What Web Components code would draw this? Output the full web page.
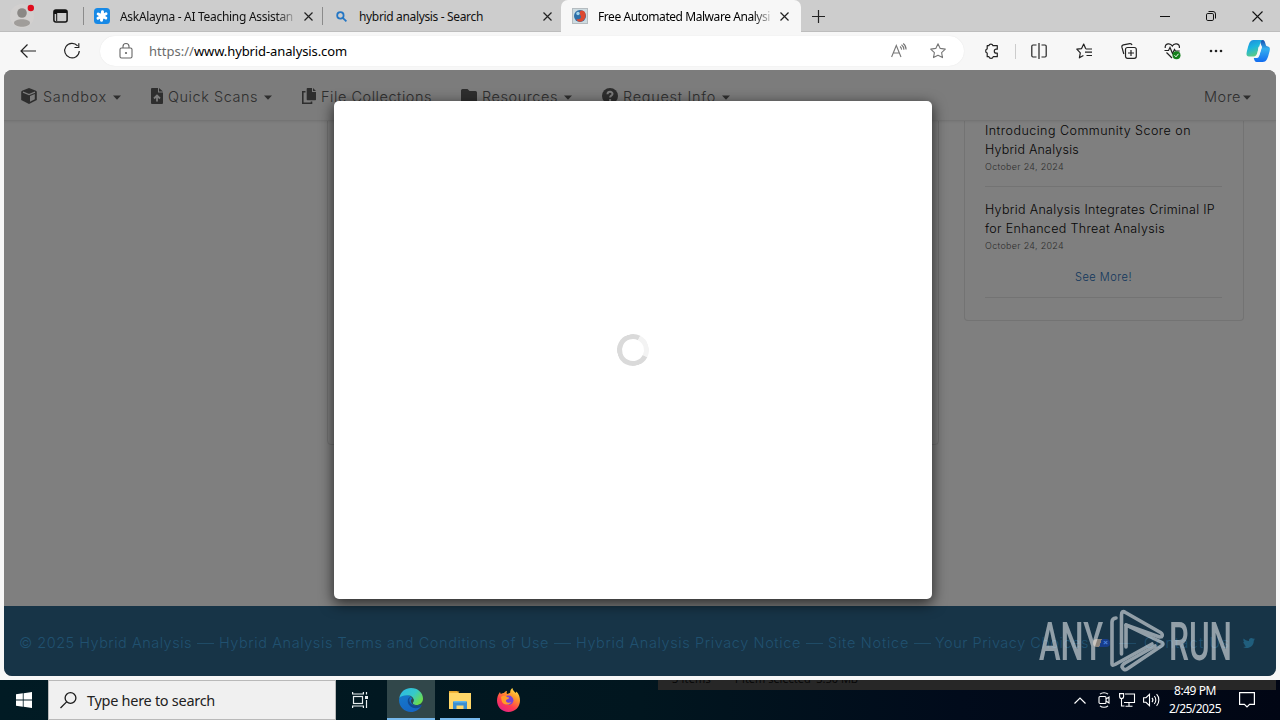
<!DOCTYPE html>
<html lang="en">
<head>
<meta charset="utf-8">
<title>Free Automated Malware Analysis Service</title>
<style>
html,body{margin:0;width:1280px;height:720px;overflow:hidden;background:#f6f6f6}
body{font-family:"Noto Sans","Open Sans",sans-serif}
</style>
</head>
<body>
<desktop-screen></desktop-screen>
<script>
const define = (name, css, html, setup) => customElements.define(name, class extends HTMLElement {
  constructor() {
    super();
    const root = this.attachShadow({ mode: 'open' });
    const t = document.createElement('template');
    t.innerHTML = `<style>*{box-sizing:border-box}svg{display:block;flex:none;overflow:visible}${css}</style>${html}`;
    root.append(t.content.cloneNode(true));
  }
  connectedCallback() { if (setup) setup(this, this.shadowRoot); }
});

/* Single line of text tracked so that it fills the width in its "w" attribute */
define('fit-text', ':host{display:block;white-space:nowrap;flex:none}span{display:inline-block;white-space:pre}', '<span><slot></slot></span>', (el, root) => {
  const s = root.querySelector('span'), w = +el.getAttribute('w');
  const n = el.textContent.length;
  s.style.letterSpacing = '0px';
  const now = s.getBoundingClientRect().width;
  if (now) s.style.letterSpacing = ((w - now) / n).toFixed(3) + 'px';
  el.style.width = w + 'px';
});

const ICONS = {
  cube: [16,16,'<path fill="currentColor" d="M8 0l7 2.700.8 1V12l-7.800 4L.2 12V3.700L1 2.700z"/><path fill="none" stroke="#7c7c7c" stroke-width="1.300" d="M2 4.200l6 2.300 6-2.300"/><path fill="#7c7c7c" d="M9 8l4.800-2v5.200L9 13.700z"/>'],
  fileup: [12,16,'<path fill="currentColor" d="M1 0h6v4.500h5V15a1 1 0 0 1-1 1H1a1 1 0 0 1-1-1V1a1 1 0 0 1 1-1zM8 0l4 3.500H8z"/><path fill="none" stroke="#7c7c7c" stroke-width="1.800" d="M6 13.500V8M3 10.500l3-3 3 3"/>'],
  copy: [14,16,'<path fill="currentColor" d="M5.500 0H10v4h4v7.500a.8.8 0 0 1-.8.8H5.500a.8.800 0 0 1-.8-.8V.8a.8.800 0 0 1 .8-.8zM11 0l3 3h-3z"/><path fill="none" stroke="currentColor" stroke-width="1.600" d="M3.500 3.800H.8v11.400h8.700v-1.700"/>'],
  folder: [16,14,'<path fill="currentColor" d="M1.500 0h5l2 2h6A1.500 1.500 0 0 1 16 3.500v9a1.500 1.500 0 0 1-1.500 1.500h-13A1.500 1.500 0 0 1 0 12.500v-11A1.500 1.500 0 0 1 1.500 0z"/>'],
  help: [16,16,'<circle cx="8" cy="8" r="8" fill="currentColor"/><path fill="none" stroke="#7c7c7c" stroke-width="2" d="M5.500 6.200C5.700 3 10.700 3.200 10.500 6c-.1 1.700-2.400 1.600-2.400 3.400M8.100 11v2"/>'],
  caret: [8,5,'<path fill="currentColor" d="M0 .5h8L4 4.700z"/>'],
  close: [9,9,'<path stroke="#222" stroke-width="1.200" d="M.5.5l8 8M8.500.5l-8 8"/>'],
  back: [16,14,'<path fill="none" stroke="#222" stroke-width="1.200" d="M16 7H1M7.500.5L1 7l6.500 6.500"/>'],
  reload: [16,16,'<path fill="none" stroke="#222" stroke-width="1.200" d="M13.600 2.900A7.300 7.300 0 1 0 15.300 8M14.800.3v4.200h-4.300"/>'],
  lock: [14,16,'<g fill="none" stroke="#666" stroke-width="1.100"><rect x="1" y="5" width="12" height="10" rx="1.500"/><path d="M4 5V3.500a3 3 0 0 1 6 0V5"/></g><circle cx="7" cy="10" r="1.100" fill="#666"/>'],
  read: [16,16,'<g fill="none" stroke="#777" stroke-width="1.100"><path d="M.6 14L5.300 2.500l4.700 11.500M2.200 10h6.200M9 3.500c1 .8 1.500 1.900 1.600 3.100M10.500 1.800c1.600 1.200 2.400 3 2.400 5M12.200.5c2 1.500 2.900 3.800 2.900 6"/></g>'],
  star: [16,16,'<path fill="none" stroke="#777" stroke-width="1.100" stroke-linejoin="round" d="M8 .8l2.200 4.600 5.100.7-3.700 3.500.9 5L8 12.200l-4.500 2.400.9-5L.7 6.100l5.100-.7z"/>'],
  puzzle: [15,16,'<path fill="none" stroke="#222" stroke-width="1.200" stroke-linejoin="round" d="M4.800 2.700a2.200 2.200 0 0 1 4.200 0h4.300v3.500h-1a2 2 0 0 0 0 4h1v3.500H9.200a2.200 2.200 0 0 1-4.300 0H3.200v-3.600a2.200 2.200 0 0 1 0-4.200V2.700z"/>'],
  split: [16,16,'<path fill="none" stroke="#222" stroke-width="1.200" d="M5.500 2H2a1.200 1.200 0 0 0-1.200 1.200v9.600A1.200 1.200 0 0 0 2 14h3.500M10.500 2H14a1.200 1.200 0 0 1 1.200 1.200v9.600A1.200 1.200 0 0 1 14 14h-3.500M8 0v16"/>'],
  favs: [16,16,'<path fill="none" stroke="#222" stroke-width="1.200" stroke-linejoin="round" d="M9.700 5.800L7.700 1 5.600 5.600.8 6.200l3.500 3.600-.9 5 4-2.300M9.700 6H16M9 9.200h7M10.500 12.500H16"/>'],
  coll: [16,16,'<g fill="none" stroke="#222" stroke-width="1.200"><rect x="4.500" y="4.500" width="10.800" height="10.800" rx="2"/><path d="M10 7v6M7 10h6M2.800 11L.9 4.200a2 2 0 0 1 1.500-2.300L8.800.6a2 2 0 0 1 2.200 1.400"/></g>'],
  heart: [17,16,'<path fill="none" stroke="#222" stroke-width="1.200" d="M.5 7.500h4l1.500-3 2.500 6 2-4 1 1.500h4.200M1.200 5C.8 0 6.500-.3 8.300 3 10-.3 16 0 15.400 5M2.500 9.500L8 15"/><circle cx="12.500" cy="12.300" r="4" fill="#15801c"/><path stroke="#fff" fill="none" d="M10.500 12.300l1.500 1.500 2.500-3"/>'],
  dots: [14,4,'<g fill="#222"><circle cx="2" cy="2" r="1.300"/><circle cx="7" cy="2" r="1.300"/><circle cx="12" cy="2" r="1.300"/></g>'],
  copilot: [24,24,'<defs><linearGradient id="a" x2=".4" y2="1"><stop stop-color="#2088dd"/><stop offset=".5" stop-color="#1bb5df"/><stop offset="1" stop-color="#5ecb83"/></linearGradient><linearGradient id="b" x2="0" y1="0" y2="1"><stop stop-color="#1749ad"/><stop offset=".4" stop-color="#34afef"/><stop offset="1" stop-color="#126cf0"/></linearGradient></defs><path fill="url(#b)" d="M14 1h2.500c2 0 2.500 2 3.200 4.500.4 1.500 1 1.800 2.300 2 3 .7 1.800 4 .8 7.500-1.200 4.500-2.500 8-6 8h-6c-2 0-2.500-2-3-4h3c2 0 2.500-2 3.500-5.500L16 8c-1-2-2-5-2-7z"/><path fill="url(#a)" d="M7.500 1H17c-2 .3-2.600 2.500-3.600 6l-2 6.800c-.8 2.700-1.700 3.700-4 3.700H3c-3.600 0-2.500-4-1.500-7.500C2.800 5.500 3.500 1 7.500 1z"/><path fill="#f7f7f7" d="M12.500 7.700h3.300l-2.600 8.600H9.500c1 0 1.500-1 2-2.600z"/>'],
  winlogo: [16,16,'<path fill="#fff" d="M0 2.200L6.800 1.300v6.300H0zM7.600 1.200L16 0v7.600H7.600zM0 8.400h6.800v6.300L0 13.800zM7.600 8.400H16V16l-8.400-1.200z"/>'],
  search: [17,17,'<g fill="none" stroke="#1c1c1c" stroke-width="1.300"><circle cx="10.500" cy="6" r="5.400"/><path d="M6.600 9.900L.5 16"/></g>'],
  taskview: [16,16,'<g fill="none" stroke="#e8eef0" stroke-width="1.200"><rect x="1.500" y="4.500" width="9" height="7"/><path d="M.6 0v2h10.800V0M.6 16v-2h10.800v2M14.500 0v2.500M14.500 8v8"/></g><path fill="#e8eef0" d="M13 4h3v3h-3z"/>'],
  edge: [24,24,'<defs><linearGradient id="e1" x2="1" y2=".6"><stop stop-color="#2bb7e8"/><stop offset=".6" stop-color="#36c9c9"/><stop offset="1" stop-color="#6bdc4e"/></linearGradient><linearGradient id="e2" x2=".6" y2="1"><stop stop-color="#1579c9"/><stop offset="1" stop-color="#1565c4"/></linearGradient></defs><path fill="url(#e2)" d="M.3 10C2 6 8 6 11 8c3 2 3 8 11.600 9.500C20.500 21.500 16.500 24 12 24 5.400 24 0 18.600 0 12z"/><path fill="url(#e1)" d="M.3 10C1.500 3.500 6.500 0 12 0c7 0 12 5 12 10.500 0 4-3 6.500-6.500 6.500-3 0-4.300-1.200-3.500-2.500 1.800-2.500 0-6.500-4-7C6 7 2 8 .3 10z"/><path fill="#124a91" d="M8.700 13c0-2.500 1.500-4 3.300-4.200-3 2.200-1.700 6 1 7.700 3 1.800 6.500 1.500 9 .3 1 0 .3 1-.5 2-5 3.500-12.800 0-12.800-5.800z"/><path fill="#31474a" d="M14 14.500c1-1.200.9-3-.3-4.200-1.800.9-2.500 3-.7 5.500 2 2.200 6 2.500 8.800.8-3 1-9 .5-7.800-2.100z"/>'],
  explorer: [22,18,'<path fill="#e09a20" d="M0 0h8l2 2H0z"/><path fill="#ffd768" d="M0 2h22v16H0z"/><path fill="#f0b63b" d="M0 2h9l1.500-1.500H0z"/><path fill="#3b8fd0" d="M4 10.500h14V18h-3.500v-3.500h-7V18H4z"/><path fill="#60b7ea" d="M5 10h12v1.500H5z"/>'],
  firefox: [23,24,'<defs><linearGradient id="f1" x1=".9" y1="0" x2=".3" y2="1"><stop stop-color="#fff04e"/><stop offset=".35" stop-color="#ff9a2a"/><stop offset=".7" stop-color="#ff3b50"/><stop offset="1" stop-color="#e52383"/></linearGradient></defs><path fill="url(#f1)" d="M3 4c.2 1 .5 1.500 1 2 .8-.8 2-1 3-1 1-1.500 2-2 3-2-.5 1-.5 2 0 3 1.500 0 2-1 3.200-1.300C13 3 14 1 15.500 0c0 2 1.500 3.200 3.300 5l.6-1.500C22 6 23 9.500 23 12.500 23 19 18 24 11.500 24S0 19 0 12.500C0 9.500 1 6.500 3 4z"/><circle cx="11.700" cy="12.200" r="4.700" fill="#7642d8"/><path fill="#ff9c28" d="M4 9c2-2 5-1.500 6 0 1 .3 2 .3 2 1-.2 1.300-3 1-3 3 .3 2 4 2.500 5.500.8C13 18 5 17.500 4.500 12z"/>'],
  up: [12,7,'<path fill="none" stroke="#fff" stroke-width="1.200" d="M.5 6.500L6 1l5.500 5.500"/>'],
  meet: [12,16,'<g fill="none" stroke="#fff" stroke-width="1.100"><rect x="1" y="4.500" width="7" height="7" rx="1"/><path d="M8 7l3-2v6L8 9M2 2.200C4 .2 8 .2 10 2.200M2 13.800c2 2 6 2 8 0"/></g>'],
  net: [16,14,'<g fill="none" stroke="#fff" stroke-width="1.100"><path d="M6 1h9.500v8.500H5M10 9.500v3.500M6.500 13.200h7M2.500 6v7h3"/><path d="M.6.600h4v3a2 2 0 0 1-4 0z"/></g>'],
  sound: [17,14,'<g fill="none" stroke="#fff" stroke-width="1.100"><path d="M.6 4.700H3L6.500 1.300v11.400L3 9.300H.6zM9 4.800c1 1.200 1 3.200 0 4.400M11.300 3c2 2.200 2 5.800 0 8M13.600 1.200c3 3.200 3 8.400 0 11.600"/></g>'],
  note: [16,16,'<path fill="none" stroke="#fff" stroke-width="1.200" d="M.6.600h14.800v11.800h-4.800L8 15l-2.600-2.600H.6z"/>'],
  bird: [12,10,'<path fill="#205e7d" d="M12 1.200l-1.200 1.500C10.800 7.500 7 10 3.800 10 2.300 10 1 9.500 0 9c1.300 0 2.500-.3 3.400-1C2.300 8 1.500 7.200 1.200 6.200h1C1 5.900.3 5 .3 3.700l1 .3C.2 3 .1 1.700.7.600 2 2 3.800 3 6 3.100 5.600 1 7 0 8.400 0c.7 0 1.300.3 1.800.8l1.500-.6-1 1.300z"/>'],
  min: [10,10,'<path stroke="#111" d="M0 5.500h10"/>'],
  max: [10,10,'<g fill="none" stroke="#111"><rect x=".5" y="2.500" width="7" height="7" rx="1.300"/><path d="M2.500.5H7a2.500 2.500 0 0 1 2.500 2.500v4.500"/></g>'],
  quit: [11,11,'<path stroke="#111" stroke-width="1.100" d="M.5.5l10 10M10.500.5l-10 10"/>'],
  plus: [13,13,'<path stroke="#222" stroke-width="1.200" d="M0 6.500h13M6.500 0v13"/>'],
  tabs: [15,14,'<rect x=".9" y=".9" width="13.200" height="12.200" rx="2" fill="none" stroke="#111" stroke-width="1.500"/><path fill="#111" d="M1 1h13v3H1zM1 4h3.200v8H3.200V5H1z"/>'],
  person: [24,24,'<circle cx="12" cy="12" r="12" fill="#d2d0cf"/><circle cx="12" cy="9" r="4.800" fill="#8b8885"/><path fill="#a09d9a" d="M4 19c0-5 16-5 16 0-1 5-15 5-16 0z"/><circle cx="20.800" cy="4" r="3.200" fill="#e00b1c"/>'],
  askfav: [16,16,'<rect width="16" height="16" rx="3.500" fill="#1789e6"/><path stroke="#fff" stroke-width="3" stroke-linecap="round" d="M8.500 3.800l-1 8.400M4.200 6l7.600 4M4 10.200l8-4.400"/>'],
  lens: [11,11,'<g fill="none" stroke="#2476c4" stroke-width="1.800"><circle cx="4.400" cy="4.400" r="3.200"/><path d="M6.800 6.800l3.600 3.600"/></g>'],
  hafav: [16,16,'<rect x=".5" y=".5" width="15" height="15" fill="#cddbe0" stroke="#b5bcc0"/><circle cx="8" cy="8" r="6" fill="#2d6fa9"/><path fill="#dd4930" d="M9 2.500C14 2 15.500 9 11 12.800c-3 1.800-6.500.7-6.500-1.800 3 1 5.500-1 4-3.500C7 5.500 7.500 3 9 2.500z"/><circle cx="6" cy="5.500" r="1.700" fill="#9fd4ee"/>'],
};
define('ui-icon', ':host{display:block;flex:none}', '', (el, root) => {
  const [w, h, body] = ICONS[el.getAttribute('name')];
  root.innerHTML += `<svg width="${w}" height="${h}" viewBox="0 0 ${w} ${h}">${body}</svg>`;
});

define('browser-tab', `
:host{display:flex;align-items:center;width:239px;height:32px;font-size:12px;color:#111;padding:0 10px}
:host([ruled]){background:linear-gradient(#8b8b8b,#8b8b8b) right center/1px 18px no-repeat}
:host([active]){background:#f7f7f7;border-radius:7px 7px 0 0;width:240px;margin-left:-1px;padding:0 12px 0 11px;color:#000}
.i{width:16px;display:flex;justify-content:center;margin-right:10px}
.t{flex:1;overflow:hidden;min-width:0;margin-right:10px}
:host([fade]) .t{-webkit-mask:linear-gradient(90deg,#000 90%,#0003)}`,
`<div class="i"><slot name="icon"></slot></div><div class="t"><slot></slot></div><ui-icon name="close"></ui-icon>`);

define('tab-strip', `
:host{display:flex;height:32px;background:#cdcdcd;align-items:center;box-shadow:inset 0 -1px #bdbdbd}
.lead{display:flex;align-items:center;gap:19px;width:84px;height:18px;padding-left:10px;border-right:1px solid #8b8b8b}
.end{flex:1;display:flex;align-items:center;padding:0 17px 0 11px}.sp{flex:1}.win{display:flex;gap:36px;align-items:center}`,
`<div class="lead"><ui-icon name="person"></ui-icon><ui-icon name="tabs"></ui-icon></div>
<browser-tab ruled fade><ui-icon slot="icon" name="askfav"></ui-icon><fit-text w="173">AskAlayna - AI Teaching Assistan</fit-text></browser-tab>
<browser-tab><ui-icon slot="icon" name="lens"></ui-icon><fit-text w="124">hybrid analysis - Search</fit-text></browser-tab>
<browser-tab active fade><ui-icon slot="icon" name="hafav"></ui-icon><fit-text w="172">Free Automated Malware Analysi</fit-text></browser-tab>
<div class="end"><ui-icon name="plus"></ui-icon><div class="sp"></div><div class="win"><ui-icon name="min"></ui-icon><ui-icon name="max"></ui-icon><ui-icon name="quit"></ui-icon></div></div>`);

define('address-bar', `
:host{display:flex;height:38px;background:#f7f7f7;align-items:center;padding:0 10px 0 20px}
.nav{display:flex;gap:28px;align-items:center;width:80px}
.field{display:flex;align-items:center;width:864px;height:30px;border-radius:15px;background:#fff;padding:0 18px 0 19px;font-size:13px;color:#000;box-shadow:0 0 1px #ddd}
.field ui-icon+fit-text{margin-left:16px}.p{color:#6b6b6b}.sp{flex:1}
.acts{display:flex;align-items:center;width:239px;margin-left:20px;justify-content:space-between}
.acts i{width:1px;height:15px;background:#ccc}.cp{margin-left:auto}.r{display:flex;gap:23px;margin-right:0}`,
`<div class="nav"><ui-icon name="back"></ui-icon><ui-icon name="reload"></ui-icon></div>
<div class="field"><ui-icon name="lock"></ui-icon><fit-text class="p" w="45">https://</fit-text><fit-text w="153">www.hybrid-analysis.com</fit-text><div class="sp"></div><div class="r"><ui-icon name="read"></ui-icon><ui-icon name="star"></ui-icon></div></div>
<div class="acts"><ui-icon name="puzzle"></ui-icon><i></i><ui-icon name="split" style="margin-right:13px"></ui-icon><ui-icon name="favs" style="margin-right:13px"></ui-icon><ui-icon name="coll" style="margin-right:12px"></ui-icon><ui-icon name="heart" style="margin-right:12px"></ui-icon><ui-icon name="dots"></ui-icon></div>
<ui-icon class="cp" name="copilot"></ui-icon>`);

define('nav-item', `
:host{display:flex;align-items:center;color:#2e2e2e;height:20px}
.ic{display:flex;margin-right:5px}:host([bare]) .ic{display:none}
slot:not([name])::slotted(fit-text){margin-top:1px}
ui-icon.c{margin-left:6px;margin-top:3px}:host([nocaret]) .c{display:none}:host([bare]) .c{margin-left:2px}`,
`<div class="ic"><slot name="icon"></slot></div><slot></slot><ui-icon class="c" name="caret"></ui-icon>`);

define('site-nav', `
:host{display:flex;align-items:center;height:51px;padding:2px 25px 0 17px;background:#7c7c7c;border-bottom:1px solid #747474;box-shadow:0 1px 2px #0001;font:300 14.500px Inter,sans-serif;position:relative}
.sp{flex:1}`,
`<nav-item><ui-icon slot="icon" name="cube" style="margin-right:1px"></ui-icon><fit-text w="64">Sandbox</fit-text></nav-item>
<nav-item style="margin-left:30px"><ui-icon slot="icon" name="fileup"></ui-icon><fit-text w="90">Quick Scans</fit-text></nav-item>
<nav-item nocaret style="margin-left:30px"><ui-icon slot="icon" name="copy"></ui-icon><fit-text w="111">File Collections</fit-text></nav-item>
<nav-item style="margin-left:29px"><ui-icon slot="icon" name="folder"></ui-icon><fit-text w="76">Resources</fit-text></nav-item>
<nav-item style="margin-left:30px"><ui-icon slot="icon" name="help"></ui-icon><fit-text w="93">Request Info</fit-text></nav-item>
<div class="sp"></div><nav-item bare><fit-text w="37">More</fit-text></nav-item>`);

define('news-card', `
:host{display:block;width:280px;height:201px;border:1px solid #737373;border-radius:0 0 4px 4px;border-top:0;padding:1px 21px 0 20px;font:300 12.500px/19px Inter,sans-serif;color:#050505}
article{border-bottom:1px solid #737373;height:66px;margin-bottom:13px}
article.last{height:98px;margin:0}
small{display:block;font-size:9px;line-height:13px;color:#2d2d2d;margin-top:1px}
a{display:flex;justify-content:center;color:#10365c;font-size:11px;line-height:16px;margin-top:17px}`,
`<article><fit-text w="206">Introducing Community Score on</fit-text><fit-text w="94">Hybrid Analysis</fit-text><small><fit-text w="79">October 24, 2024</fit-text></small></article>
<article class="last"><fit-text w="230">Hybrid Analysis Integrates Criminal IP</fit-text><fit-text w="180">for Enhanced Threat Analysis</fit-text><small><fit-text w="79">October 24, 2024</fit-text></small><a><fit-text w="57">See More!</fit-text></a></article>`);

define('site-footer', `
:host{display:flex;align-items:center;height:70px;background:#173447;padding:3px 0 0 15px;font:300 14.500px Inter,sans-serif;color:#205170}
b{width:17px;height:1px;background:#1f4b66;margin:2px 5px 0;flex:none}
.opt{display:flex;flex:none;width:17px;height:8px;margin-left:4px;border-radius:4px;background:linear-gradient(108deg,#8c847c 44%,#173d8a 46%);font:bold 8px/7px "Liberation Sans",sans-serif;color:#4f87e0;justify-content:flex-end;padding-right:2px}
ui-icon{margin-left:13px}`,
`<fit-text w="173">© 2025 Hybrid Analysis</fit-text><b></b><fit-text w="330">Hybrid Analysis Terms and Conditions of Use</fit-text><b></b><fit-text w="225">Hybrid Analysis Privacy Notice</fit-text><b></b><fit-text w="81">Site Notice</fit-text><b style="margin-right:4px"></b><fit-text w="154">Your Privacy Choices</fit-text><span class="opt">×</span><b style="margin:2px 8px 0 9px"></b><fit-text w="86">Contact Us</fit-text><ui-icon name="bird"></ui-icon>`);

define('loading-dialog', `
:host{display:flex;align-items:center;justify-content:center;width:598px;height:498px;border-radius:5px;background:#fff;box-shadow:0 4px 14px 1px rgba(0,0,0,.65)}
i{width:32px;height:32px;border-radius:50%;border:5px solid #dadada;border-right-color:#f3f3f3;transform:rotate(-18deg)}`, `<i></i>`);

define('web-page', `
:host{display:flex;flex-direction:column;height:606px;margin:0 4px;border-radius:8px;background:#7f7f7f;overflow:hidden;position:relative}
main{flex:1;display:flex;justify-content:flex-end;align-items:flex-start;padding-right:32px;gap:25px;margin-top:-1px}
.panel{width:612px;height:325px;border:1px solid #727272;border-radius:0 0 4px 4px}
loading-dialog{position:absolute;left:330px;top:31px}`,
`<site-nav></site-nav><main><div class="panel"></div><news-card></news-card></main><site-footer></site-footer><loading-dialog></loading-dialog>`);

define('sandbox-watermark', `:host{display:block}svg{opacity:.53}text{font-family:Roboto,sans-serif;font-size:53px;font-weight:500;fill:#fff}`,
`<svg width="194" height="64" viewBox="0 0 194 64">
<text x="1" y="51" textLength="64" lengthAdjust="spacingAndGlyphs">ANY</text>
<text x="131" y="51" textLength="63" lengthAdjust="spacingAndGlyphs">RUN</text>
<g fill="none" stroke="#fff" stroke-width="3.600" stroke-linejoin="round" stroke-linecap="round"><path d="M78 9q-4 .3-4 4v42q0 2 3 .5L114 35"/><path d="M83.500 45V6q0-5 4-2.500l35 20q3 2 1 4.200l-2 .3L88 16v22"/><path d="M88 16l36 17.500q2 1.500 0 3L89 60q-3 2-5-2 0-2 3-4l30-17"/></g></svg>`);

define('task-bar', `
:host{display:flex;height:40px;background:linear-gradient(90deg,#011b24,#01161f 50%,#010b1b 75%,#010614);position:relative;color:#fff}
.start{width:48px;display:flex;align-items:center;justify-content:center}
.search{width:288px;background:#f0f0f0;border:1px solid #b9b9b9;display:flex;align-items:center;padding-left:11px;color:#222;font-size:14.500px}
.search fit-text{margin-left:10px}
.app{width:48px;display:flex;align-items:center;justify-content:center;height:40px}
.app.on{background:#31474a;box-shadow:inset 0 -2px #76b9ed}.run{width:40px;margin:0 5px;box-shadow:inset 0 -2px #76b9ed}
.behind{position:absolute;left:658px;top:0;width:618px;height:10px;background:#272727;overflow:hidden;font-size:11px;color:#080808;display:flex;padding-left:14px;gap:22px}
.behind fit-text{line-height:16px;margin-top:-9px}
.tray{margin-left:auto;display:flex;align-items:center;position:relative;padding-right:25px}
.clock{display:flex;flex-direction:column;align-items:center;font-size:12px;line-height:18px;margin:0 18px 0 9px}`,
`<div class="behind"><fit-text w="39">3 items</fit-text><fit-text w="125">1 item selected  3.50 MB</fit-text></div>
<div class="start"><ui-icon name="winlogo"></ui-icon></div>
<div class="search"><ui-icon name="search"></ui-icon><fit-text w="128">Type here to search</fit-text></div>
<div class="app"><ui-icon name="taskview"></ui-icon></div>
<div class="app on" style="margin-left:3px"><ui-icon name="edge"></ui-icon></div>
<div class="app run"><ui-icon name="explorer"></ui-icon></div>
<div class="app" style="margin-left:-1px"><ui-icon name="firefox"></ui-icon></div>
<div class="tray"><ui-icon name="up"></ui-icon><ui-icon name="meet" style="margin-left:12px"></ui-icon><ui-icon name="net" style="margin-left:9px"></ui-icon><ui-icon name="sound" style="margin-left:8px"></ui-icon><div class="clock"><fit-text w="42">8:49 PM</fit-text><fit-text w="52">2/25/2025</fit-text></div><ui-icon name="note"></ui-icon></div>`);

define('desktop-screen', `
:host{display:flex;flex-direction:column;width:1280px;height:720px;position:relative}
.win{height:680px;background:#f7f7f7}
sandbox-watermark{position:absolute;left:1038px;top:609px}`,
`<div class="win"><tab-strip></tab-strip><address-bar></address-bar><web-page></web-page></div><task-bar></task-bar><sandbox-watermark></sandbox-watermark>`);
</script>
</body>
</html>
